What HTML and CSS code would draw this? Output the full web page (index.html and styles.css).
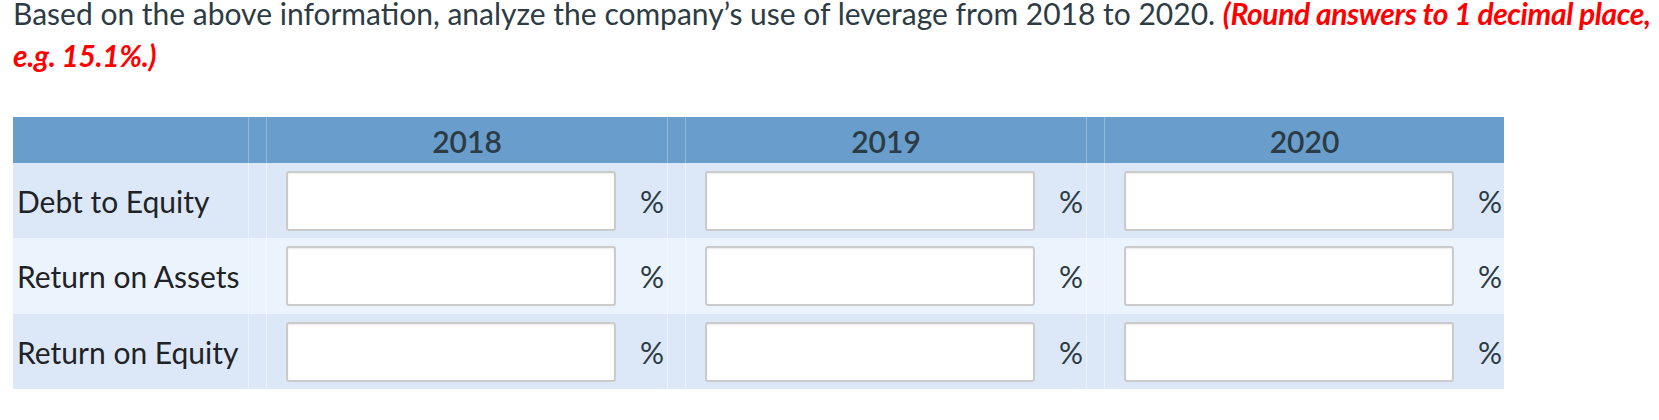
FILE: index.html
```html
<!DOCTYPE html>
<html lang="en">
<head>
<meta charset="utf-8">
<title>Leverage analysis</title>
<link rel="stylesheet" href="styles.css">
</head>
<body>
<main class="page">
  <p class="prompt">Based on the above information, analyze the company’s use of leverage from 2018 to 2020. <strong class="hint">(Round answers to 1 decimal place, e.g. 15.1%.)</strong></p>

  <div class="sheet">
    <div class="row head">
      <div class="cell label"></div>
      <div class="cell gap"></div>
      <div class="cell year">2018</div>
      <div class="cell gap"></div>
      <div class="cell year">2019</div>
      <div class="cell gap"></div>
      <div class="cell year">2020</div>
    </div>

    <div class="row odd">
      <div class="cell label">Debt to Equity</div>
      <div class="cell gap"></div>
      <div class="cell entry"><input class="box" type="text"><span class="unit">%</span></div>
      <div class="cell gap"></div>
      <div class="cell entry"><input class="box" type="text"><span class="unit">%</span></div>
      <div class="cell gap"></div>
      <div class="cell entry"><input class="box" type="text"><span class="unit">%</span></div>
    </div>

    <div class="row even">
      <div class="cell label">Return on Assets</div>
      <div class="cell gap"></div>
      <div class="cell entry"><input class="box" type="text"><span class="unit">%</span></div>
      <div class="cell gap"></div>
      <div class="cell entry"><input class="box" type="text"><span class="unit">%</span></div>
      <div class="cell gap"></div>
      <div class="cell entry"><input class="box" type="text"><span class="unit">%</span></div>
    </div>

    <div class="row odd">
      <div class="cell label">Return on Equity</div>
      <div class="cell gap"></div>
      <div class="cell entry"><input class="box" type="text"><span class="unit">%</span></div>
      <div class="cell gap"></div>
      <div class="cell entry"><input class="box" type="text"><span class="unit">%</span></div>
      <div class="cell gap"></div>
      <div class="cell entry"><input class="box" type="text"><span class="unit">%</span></div>
    </div>
  </div>
</main>
</body>
</html>
```

FILE: styles.css
```css
html, body {
  margin: 0;
  padding: 0;
  background: #ffffff;
}

.page {
  padding: 0 0 0 13px;
  font-family: "Lato", "Liberation Sans", sans-serif;
  color: #2d3b45;
}

.prompt {
  margin: -8px 0 0 0;
  font-size: 30px;
  line-height: 42px;
}

.hint {
  color: #ff0000;
  font-weight: 700;
  font-style: italic;
  letter-spacing: -0.4px;
}

.sheet {
  margin-top: 41px;
  width: 1491px;
}

.row {
  display: grid;
  grid-template-columns: 235px 18px 401px 18px 401px 18px 400px;
  height: 75px;
}

.row.head {
  height: 46px;
  background: #699ecc;
}

.row.odd {
  background: #dce8f7;
}

.row.even {
  background: #ebf3fd;
  height: 76px;
}

.cell {
  display: flex;
  align-items: center;
  font-size: 30px;
}

.cell + .cell {
  border-left: 1px solid rgba(255, 255, 255, 0.45);
}

.head .cell + .cell {
  border-left: 1px solid rgba(255, 255, 255, 0.28);
}

.label {
  padding-left: 4px;
  color: #1f2226;
}

.year {
  justify-content: center;
  color: #2d3b45;
  font-weight: 600;
  padding-top: 1px;
}

.entry {
  padding-left: 19px;
}

.box {
  box-sizing: border-box;
  width: 330px;
  height: 60px;
  margin: 0;
  border: 2px solid #cbcbcb;
  border-radius: 3px;
  background: #ffffff;
  box-shadow: inset 0 1px 2px rgba(0, 0, 0, 0.08);
  font: inherit;
}

.unit {
  margin-left: 24px;
  color: #2d3b45;
}
```
